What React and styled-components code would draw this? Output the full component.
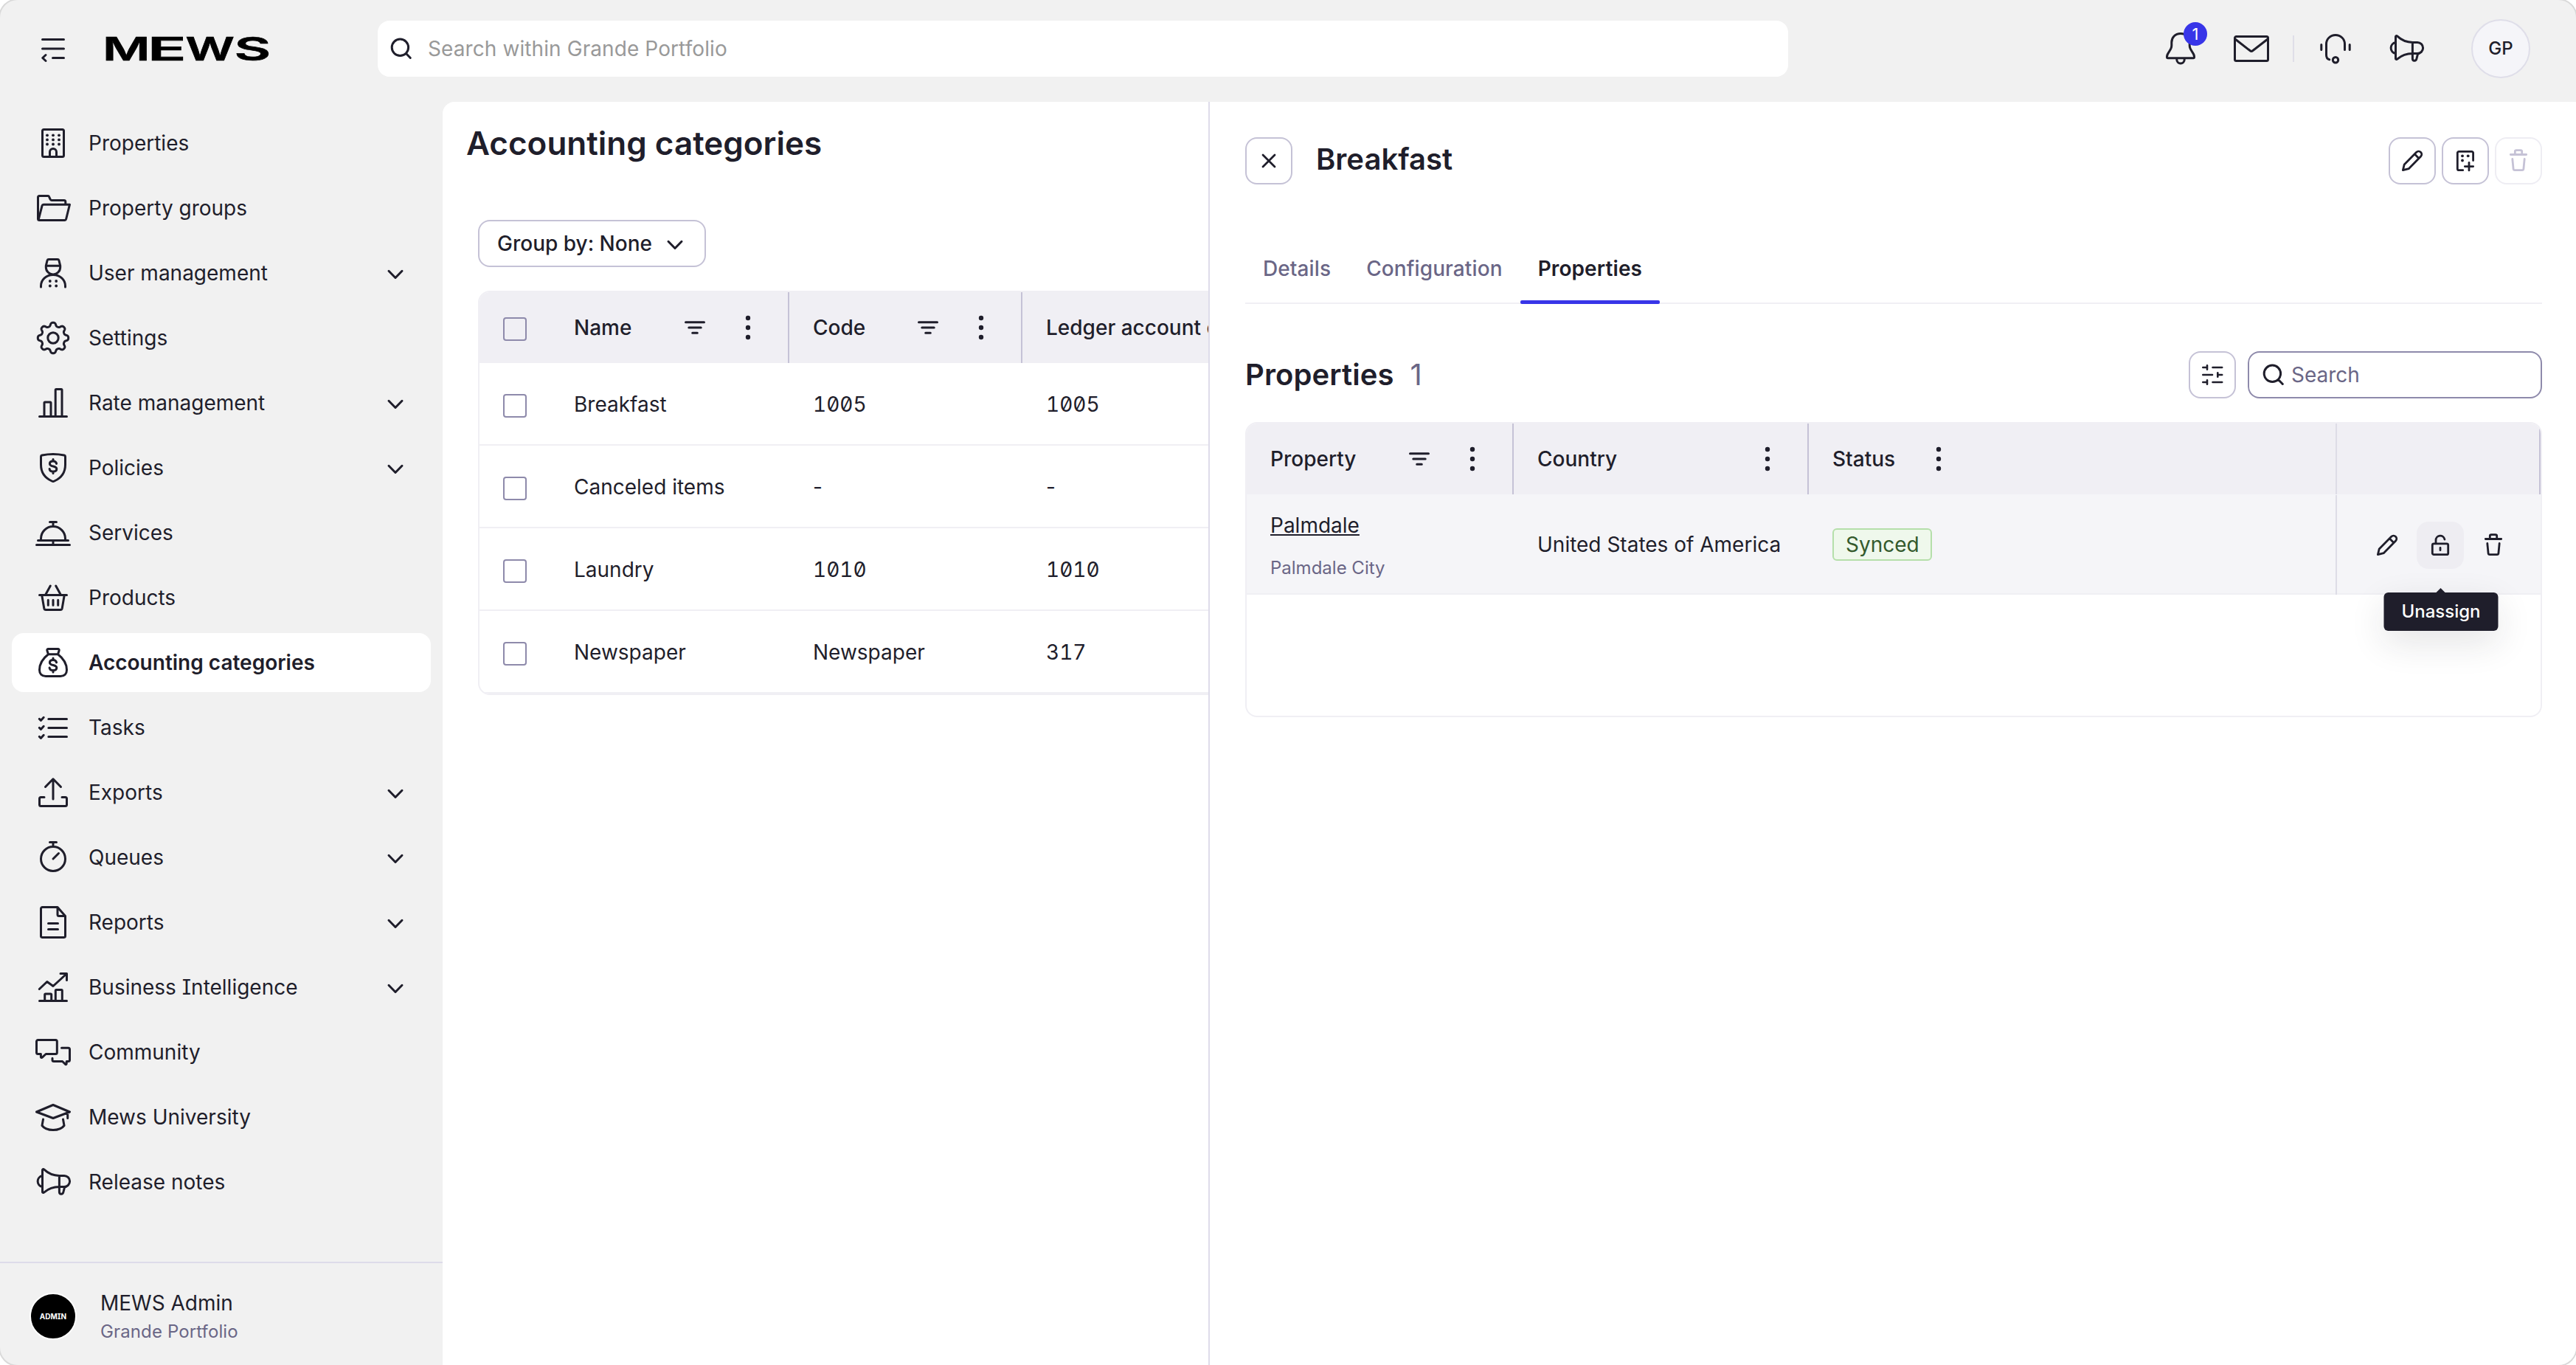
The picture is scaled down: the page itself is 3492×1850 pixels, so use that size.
import styled, { createGlobalStyle, css } from "styled-components";

const INK = "#1f1e2b";
const MUTED = "#6a6686";
const LINE = "#f0eff4";
const BORDER = "#c5c2d6";

const GlobalStyle = createGlobalStyle`
  * {
    box-sizing: border-box;
  }
  body {
    margin: 0;
    background: #ffffff;
    color: ${INK};
    font-family: Inter, "Liberation Sans", sans-serif;
    font-size: 28px;
    line-height: 40px;
    font-feature-settings: "cv08" 1;
    overflow: hidden;
  }
`;

// ICONS, 48 grid for navigation and 32 grid for buttons
const gearPath = (() => {
  const points = [];
  for (let i = 0; i < 160; i++) {
    const a = (i / 160) * Math.PI * 2;
    const r = 18.4 + 2.3 * (Math.tanh(1.7 * Math.cos(8 * a)) / Math.tanh(1.7));
    points.push(`${(24 + r * Math.sin(a)).toFixed(2)} ${(24 - r * Math.cos(a)).toFixed(2)}`);
  }
  return `M${points.join("L")}Z`;
})();

const dollar = (y) =>
  `M28.6 ${y - 3.6}c-.5-2.2-2.3-3.4-4.6-3.4-2.7 0-4.6 1.4-4.6 3.5 0 4.9 9.4 2.2 9.4 7.1 0 2.2-2 3.5-4.8 3.5-2.7 0-4.6-1.3-4.9-3.6M24 ${y - 9.4}v2.4M24 ${y + 7}v2.4`;

const PATHS = {
  menu: "M9.5 11.5h29M9.5 24h29M23.5 36.5h15M14 32.5l-4.3 4 4.3 4",
  building: "M11.5 5.5h25a2 2 0 0 1 2 2v33a2 2 0 0 1-2 2h-25a2 2 0 0 1-2-2v-33a2 2 0 0 1 2-2zM19.5 42.5V36a4.5 4.5 0 0 1 9 0v6.5",
  folder: "M40.8 19v-3.6a2 2 0 0 0-2-2H22a2 2 0 0 1-1.9-1.3l-1.4-3.3a2 2 0 0 0-1.8-1.3H5.5a2 2 0 0 0-2 2v29a2 2 0 0 0 2 2h34.2a2 2 0 0 0 1.9-1.5L46.5 19.2H11a2 2 0 0 0-1.9 1.5L4.4 39",
  user: "M14.3 14.2l1.8-7.3a2 2 0 0 1 1.9-1.4h12a2 2 0 0 1 1.9 1.4l1.8 7.3v2a9.7 9.7 0 0 1-19.4 0zM14.3 14.2h19.4M7.5 43v-1.6C7.5 33 14.6 26.5 24 26.5S40.5 33 40.5 41.4V43",
  gear: `${gearPath}M31.2 24a7.2 7.2 0 1 1-14.4 0a7.2 7.2 0 0 1 14.4 0z`,
  bars: "M5.5 42.5h37M12 42.5V24a1 1 0 0 1 1-1h7a1 1 0 0 1 1 1v18.5M27.2 42.5v-36a1 1 0 0 1 1-1H35a1 1 0 0 1 1 1v36",
  shield: `M7.5 8.8c0-.9.6-1.6 1.5-1.8C14 6 18.5 5.5 24 5.5S34 6 39 7c.9.2 1.5.9 1.5 1.8v11c0 11-6.5 18.5-14.8 22.2a4 4 0 0 1-3.4 0C14 38.3 7.5 30.8 7.5 19.8z${dollar(22)}`,
  bell: "M19.5 9.5h9M24 9.5v6M7.5 34v-2a16.5 16.5 0 0 1 33 0v2M3.5 34.5h41M24 34.5v6M1.5 40.5h45",
  basket: "M5.5 20.5h37M20.3 8l-6.6 12M27.7 8l6.6 12M8.8 21l3 17.5a2.5 2.5 0 0 0 2.5 2h19.4a2.5 2.5 0 0 0 2.5-2l3-17.5M17.3 27.3v7M24 27.3v7M30.7 27.3v7",
  moneybag: `M17.5 5.5h13a1.7 1.7 0 0 1 1.6 2.3l-1.6 4.9h-13l-1.6-4.9a1.7 1.7 0 0 1 1.6-2.3zM17.5 12.7C10.5 18 5.5 26 5.5 34c0 5.3 3.2 8.5 8.5 8.5h20c5.3 0 8.5-3.2 8.5-8.5 0-8-5-16-12-21.3${dollar(27.5)}`,
  tasks: "M17.8 12.5h24.7M17.8 24.5h24.7M17.8 36.5h24.7M5.3 12.4l2.1 2 3.8-4.1M5.3 24.4l2.1 2 3.8-4.1M5.3 36.4l2.1 2 3.8-4.1",
  upload: "M24 33V6M13.5 16.5L24 5.8l10.5 10.7M12 30.5H7.5a2 2 0 0 0-2 2v8a2 2 0 0 0 2 2h33a2 2 0 0 0 2-2v-8a2 2 0 0 0-2-2H36",
  timer: "M19.5 3.5h9M24 3.5v6M40.5 26a16.5 16.5 0 1 1-33 0a16.5 16.5 0 0 1 33 0zM24 26l7.5-7.5",
  report: "M30 3.5H9.5a2 2 0 0 0-2 2v37a2 2 0 0 0 2 2h29a2 2 0 0 0 2-2v-27zM30 3.5v10a2 2 0 0 0 2 2h8.5M17.5 25.5h13M17.5 33.5h13",
  trend: "M5.5 42.5h37M12.7 42.5V34a1 1 0 0 1 1-1h7a1 1 0 0 1 1 1v8.5M27.3 42.5v-14a1 1 0 0 1 1-1h7a1 1 0 0 1 1 1v14M5.3 26.5l10.5-10 8.2 6L42 6M34 5.5h8.5v9",
  chat: "M3.5 7.5h23.8a2 2 0 0 1 2 2v15a2 2 0 0 1-2 2H14.2l-5 4.7c-.8.7-1.8.2-1.8-.8v-3.9H3.5a2 2 0 0 1-2-2v-15a2 2 0 0 1 2-2zM35.5 18.3h9a2 2 0 0 1 2 2v14.2a2 2 0 0 1-2 2h-2.3v3c0 1-1 1.5-1.8.8l-3.8-3.8H25a2 2 0 0 1-2-2v-2.2",
  cap: "M24 7.5L46.5 17 24 25.5 1.5 17zM43.7 18.5v7M10.5 27L9 35.5c3 4 8.5 6 15 6s12-2 15-6L37.5 27",
  megaphone: "M9.5 37.4V7.8c0-1.1 1.3-1.7 2.1-.9C16.8 11.8 24 15.4 32.4 15.4H39a7.6 7.6 0 0 1 0 15.2h-6.6c-8.4 0-15.6 3.2-20.8 7.6-.8.7-2.1.2-2.1-.8zM9.5 15.6a7.6 7.6 0 0 0 0 15M32.4 15.4v22c0 3.6 4.6 3.8 5.4.6l1.9-7.4",
  notification: "M24 3.5c-7.5 0-12.2 5.4-12.2 12v4.3c0 6.7-6.3 9.5-6.3 14.9v.8c0 .7.6 1.3 1.3 1.3h34.4c.7 0 1.3-.6 1.3-1.3v-.8c0-5.4-6.3-8.2-6.3-14.9v-4.3c0-6.6-4.7-12-12.2-12zM18.8 37.5v1.2a5.2 5.2 0 0 0 10.4 0v-1.2",
  mail: "M3.5 7.5h41a2 2 0 0 1 2 2v29a2 2 0 0 1-2 2h-41a2 2 0 0 1-2-2v-29a2 2 0 0 1 2-2zM2 11l20.3 15.8a2.8 2.8 0 0 0 3.4 0L46 11",
  headset: "M36.5 25.5v-8a12.5 12 0 0 0-25 0v15c0 3.6 1.6 5.6 4.3 6.3M4.8 18.5v7M43.2 18.5v7M27.7 39.2a3.7 3.7 0 1 1-7.4 0a3.7 3.7 0 0 1 7.4 0z",
};

const DOTS = {
  building: [[16, 13.3], [24, 13.3], [32, 13.3], [16, 19.4], [24, 19.4], [32, 19.4], [16, 25.5], [24, 25.5], [32, 25.5]],
  user: [[19.8, 35], [28.2, 35], [19.8, 41.5], [28.2, 41.5]],
};

const SMALL = {
  chevron: "M7 13.3l9 9.2 9-9.2",
  search: "M25.6 14.3a11.2 11.2 0 1 1-22.4 0a11.2 11.2 0 0 1 22.4 0zM22.5 22.5l5.8 6",
  close: "M8 8l16 16M24 8L8 24",
  pencil: "M3.4 28.6L5.2 21 21.7 4.3a4.1 4.1 0 0 1 5.9 5.7L11.2 26.7zM19.7 7.3l4.9 4.9",
  addBuilding: "M26.6 15.5V5.3a2 2 0 0 0-2-2H7.3a2 2 0 0 0-2 2v21.4a2 2 0 0 0 2 2h5.4M21 18.3v10.6M15.3 23.6h11.4",
  trash: "M5.3 7.5h21.4M11.3 7V3.5a1.8 1.8 0 0 1 1.8-1.8h5.8a1.8 1.8 0 0 1 1.8 1.8V7M7.8 13.5l1.3 13.3a2 2 0 0 0 2 1.8h9.8a2 2 0 0 0 2-1.8l1.3-13.3",
  unlock: "M7.3 13.8h17.4a2 2 0 0 1 2 2v10.9a2 2 0 0 1-2 2H7.3a2 2 0 0 1-2-2V15.8a2 2 0 0 1 2-2zM10 13.8V9.3a6 6 0 0 1 11.9-1.2M16 19.3v3.4",
  sliders: "M3.3 6h5M9 3.3v5.4M16.5 6h12.7M3.3 16H16M23.3 13.3v5.4M24 16h5.2M3.3 26h5M9 23.3v5.4M16.5 26h12.7",
  filter: "M3.5 8.8h25M7.8 16h16.4M12.7 23.2h6.6",
};

const Svg = styled.svg`
  flex: none;
  display: block;
  fill: none;
  stroke: currentColor;
  stroke-linecap: round;
  stroke-linejoin: round;
  overflow: visible;
`;

const NavIcon = ({ name }) => (
  <Svg width="48" height="48" viewBox="0 0 48 48" strokeWidth="3">
    <path d={PATHS[name]} />
    {(DOTS[name] || []).map(([x, y]) => (
      <circle key={`${x}-${y}`} cx={x} cy={y} r="1.9" fill="currentColor" stroke="none" />
    ))}
  </Svg>
);

const SmallIcon = ({ name, weight = 2.8 }) => (
  <Svg width="32" height="32" viewBox="0 0 32 32" strokeWidth={weight}>
    <path d={SMALL[name]} />
    {name === "addBuilding" && (
      <g fill="currentColor" stroke="none">
        <circle cx="12" cy="9.3" r="1.9" />
        <circle cx="19.7" cy="9.3" r="1.9" />
        <circle cx="12" cy="15.5" r="1.9" />
      </g>
    )}
  </Svg>
);

const MoreIcon = () => (
  <Svg width="32" height="32" viewBox="0 0 32 32">
    <g fill="currentColor" stroke="none">
      <circle cx="16" cy="3" r="3.2" />
      <circle cx="16" cy="16" r="3.2" />
      <circle cx="16" cy="29" r="3.2" />
    </g>
  </Svg>
);

const Logo = () => (
  <LogoSvg width="224" height="48" viewBox="0 0 224 48">
    <text x="-5" y="40" textLength="64.5" lengthAdjust="spacingAndGlyphs">M</text>
    <text x="56" y="40" textLength="52.6" lengthAdjust="spacingAndGlyphs">E</text>
    <text x="107.6" y="40" textLength="66.4" lengthAdjust="spacingAndGlyphs">W</text>
    <text x="173.6" y="40" textLength="49.7" lengthAdjust="spacingAndGlyphs">S</text>
  </LogoSvg>
);

// DATA
const NAV = [
  { icon: "building", label: "Properties" },
  { icon: "folder", label: "Property groups" },
  { icon: "user", label: "User management", more: true },
  { icon: "gear", label: "Settings" },
  { icon: "bars", label: "Rate management", more: true },
  { icon: "shield", label: "Policies", more: true },
  { icon: "bell", label: "Services" },
  { icon: "basket", label: "Products" },
  { icon: "moneybag", label: "Accounting categories", active: true },
  { icon: "tasks", label: "Tasks" },
  { icon: "upload", label: "Exports", more: true },
  { icon: "timer", label: "Queues", more: true },
  { icon: "report", label: "Reports", more: true },
  { icon: "trend", label: "Business Intelligence", more: true },
  { icon: "chat", label: "Community" },
  { icon: "cap", label: "Mews University" },
  { icon: "megaphone", label: "Release notes" },
];

const CATEGORIES = [
  { name: "Breakfast", code: "1005", ledger: "1005" },
  { name: "Canceled items", code: "-", ledger: "-" },
  { name: "Laundry", code: "1010", ledger: "1010" },
  { name: "Newspaper", code: "Newspaper", ledger: "317" },
];

const TABS = ["Details", "Configuration", "Properties"];

const isNumber = (value) => /^\d/.test(value);

const App = () => {
  return (
    <Window>
      <GlobalStyle />
      <TopBar>
        <NavIcon name="menu" />
        <Logo />
        <GlobalSearch>
          <SmallIcon name="search" weight={3} />
          <span>Search within Grande Portfolio</span>
        </GlobalSearch>
        <TopActions>
          <IconSlot>
            <NavIcon name="notification" />
            <Count>1</Count>
          </IconSlot>
          <NavIcon name="mail" />
        </TopActions>
        <Divider />
        <TopActions>
          <NavIcon name="headset" />
          <NavIcon name="megaphone" />
        </TopActions>
        <Initials>GP</Initials>
      </TopBar>
      <Body>
        <Sidebar>
          <Nav>
            {NAV.map((item) => (
              <NavItem key={item.label} $active={item.active}>
                <NavIcon name={item.icon} />
                <NavLabel>{item.label}</NavLabel>
                {item.more && <SmallIcon name="chevron" weight={3} />}
              </NavItem>
            ))}
          </Nav>
          <Account>
            <Avatar>ADMIN</Avatar>
            <div>
              <AccountName>MEWS Admin</AccountName>
              <AccountPlace>Grande Portfolio</AccountPlace>
            </div>
          </Account>
        </Sidebar>
        <Main>
          <ListPane>
            <PageTitle>Accounting categories</PageTitle>
            <GroupBy>
              Group by: None
              <SmallIcon name="chevron" weight={3} />
            </GroupBy>
            <CategoryTable>
              <HeadRow>
                <CheckCell><Checkbox /></CheckCell>
                <HeadCell $width={324}><Grow>Name</Grow><SmallIcon name="filter" weight={3} /><MoreIcon /></HeadCell>
                <HeadCell $width={316}><Grow>Code</Grow><SmallIcon name="filter" weight={3} /><MoreIcon /></HeadCell>
                <HeadCell $width={480}><Grow>Ledger account code</Grow><SmallIcon name="filter" weight={3} /><MoreIcon /></HeadCell>
              </HeadRow>
              {CATEGORIES.map((row) => (
                <CategoryRow key={row.name}>
                  <CheckCell><Checkbox /></CheckCell>
                  <Cell $width={324}>{row.name}</Cell>
                  <Cell $width={316} $numeric={isNumber(row.code)}>{row.code}</Cell>
                  <Cell $width={480} $numeric={isNumber(row.ledger)}>{row.ledger}</Cell>
                </CategoryRow>
              ))}
            </CategoryTable>
          </ListPane>
          <DetailPane>
            <DetailHead>
              <IconButton><SmallIcon name="close" /></IconButton>
              <DetailTitle>Breakfast</DetailTitle>
              <ButtonGroup>
                <IconButton><SmallIcon name="pencil" /></IconButton>
                <IconButton><SmallIcon name="addBuilding" /></IconButton>
                <IconButton $disabled><SmallIcon name="trash" /></IconButton>
              </ButtonGroup>
            </DetailHead>
            <Tabs>
              {TABS.map((tab) => (
                <Tab key={tab} $active={tab === "Properties"}>{tab}</Tab>
              ))}
            </Tabs>
            <SectionHead>
              <SectionTitle>Properties</SectionTitle>
              <Total>1</Total>
              <IconButton><SmallIcon name="sliders" weight={2.6} /></IconButton>
              <TableSearch>
                <SmallIcon name="search" weight={3} />
                Search
              </TableSearch>
            </SectionHead>
            <PropertyTable>
              <HeadRow>
                <HeadCell $width={362}><Grow>Property</Grow><SmallIcon name="filter" weight={3} /><MoreIcon /></HeadCell>
                <HeadCell $width={400}><Grow>Country</Grow><MoreIcon /></HeadCell>
                <HeadCell $width={232} $plain><Grow>Status</Grow><MoreIcon /></HeadCell>
                <ActionHead />
              </HeadRow>
              <PropertyRow>
                <NameCell>
                  <PropertyLink>Palmdale</PropertyLink>
                  <City>Palmdale City</City>
                </NameCell>
                <Cell $width={400}>United States of America</Cell>
                <Cell $width={232}><Tag>Synced</Tag></Cell>
                <ActionCell>
                  <RowAction><SmallIcon name="pencil" /></RowAction>
                  <RowAction $hover>
                    <SmallIcon name="unlock" />
                    <Tooltip>Unassign</Tooltip>
                  </RowAction>
                  <RowAction><SmallIcon name="trash" /></RowAction>
                </ActionCell>
              </PropertyRow>
            </PropertyTable>
          </DetailPane>
        </Main>
      </Body>
    </Window>
  );
};

// STYLES
const Window = styled.div`
  width: 3492px;
  height: 1850px;
  display: flex;
  flex-direction: column;
  background: #f1f1f1;
  border-radius: 24px;
  box-shadow: 0 0 0 2px #d9d9d9;
  overflow: hidden;
`;

const TopBar = styled.header`
  flex: none;
  height: 132px;
  margin-bottom: 6px;
  padding: 0 62px 0 48px;
  display: flex;
  align-items: center;
`;

const LogoSvg = styled.svg`
  flex: none;
  margin: 0 144px 0 48px;
  overflow: visible;
  fill: #000;
  stroke: #000;
  stroke-width: 0.6;
  font-family: Inter, sans-serif;
  font-size: 44px;
  font-weight: 600;
`;

const GlobalSearch = styled.div`
  width: 1912px;
  height: 76px;
  margin-right: auto;
  padding: 0 16px;
  display: flex;
  align-items: center;
  gap: 20px;
  background: #fff;
  border-radius: 16px;
  letter-spacing: 0.09px;
  span {
    color: #999;
  }
`;

const TopActions = styled.div`
  display: flex;
  gap: 48px;
`;

const IconSlot = styled.div`
  position: relative;
`;

const Count = styled.span`
  position: absolute;
  top: -12px;
  left: 28px;
  width: 32px;
  height: 32px;
  display: flex;
  align-items: center;
  justify-content: center;
  border-radius: 50%;
  background: #3835e8;
  color: #fff;
  font-size: 22px;
`;

const Divider = styled.div`
  width: 2px;
  height: 36px;
  margin: 0 32px;
  background: #dfdee8;
`;

const Initials = styled.div`
  width: 80px;
  height: 80px;
  margin-left: 64px;
  display: flex;
  align-items: center;
  justify-content: center;
  border: 2px solid #dfdee9;
  border-radius: 50%;
  background: #f5f5f9;
  font-size: 24px;
  font-weight: 500;
`;

const Body = styled.div`
  flex: 1;
  min-height: 0;
  display: flex;
`;

const Sidebar = styled.aside`
  flex: none;
  width: 600px;
  display: flex;
  flex-direction: column;
  justify-content: space-between;
`;

const Nav = styled.nav`
  padding: 16px 16px 0;
  display: flex;
  flex-direction: column;
  gap: 8px;
`;

const NavItem = styled.div`
  height: 80px;
  padding: 0 32px;
  display: flex;
  align-items: center;
  gap: 24px;
  border-radius: 16px;
  ${({ $active }) => $active && css`
    background: #fff;
    font-weight: 600;
  `}
`;

const NavLabel = styled.span`
  flex: 1;
`;

const Account = styled.div`
  height: 140px;
  padding: 34px 40px 0;
  display: flex;
  align-items: flex-start;
  gap: 32px;
  border-top: 2px solid #dddcea;
`;

const Avatar = styled.div`
  width: 64px;
  height: 64px;
  margin-top: 6px;
  display: flex;
  align-items: center;
  justify-content: center;
  border: 2px solid #fff;
  border-radius: 50%;
  background: #000;
  color: #fff;
  font-size: 10px;
  font-weight: 700;
`;

const AccountName = styled.div`
  line-height: 40px;
`;

const AccountPlace = styled.div`
  color: ${MUTED};
  font-size: 24px;
  letter-spacing: 0.12px;
  line-height: 37px;
`;

const Main = styled.main`
  flex: 1;
  min-width: 0;
  display: flex;
  background: #fff;
  border-top-left-radius: 16px;
  overflow: hidden;
`;

const ListPane = styled.section`
  flex: none;
  width: 1038px;
  padding-left: 48px;
  overflow: hidden;
`;

const PageTitle = styled.h1`
  margin: 0 0 48px -16px;
  font-size: 44px;
  font-weight: 600;
  line-height: 112px;
`;

const GroupBy = styled.div`
  width: fit-content;
  height: 64px;
  padding: 0 24px;
  display: flex;
  align-items: center;
  gap: 15px;
  border: 2px solid ${BORDER};
  border-radius: 16px;
  font-weight: 500;
`;

const Table = styled.div`
  margin-top: 32px;
  border: 2px solid ${LINE};
  border-radius: 16px;
  overflow: hidden;
`;

const CategoryTable = styled(Table)`
  width: 1220px;
`;

const PropertyTable = styled(Table)`
  height: 400px;
`;

const HeadRow = styled.div`
  height: 96px;
  display: flex;
  background: ${LINE};
`;

const HeadCell = styled.div`
  flex: none;
  width: ${({ $width }) => $width}px;
  padding: 0 38px 0 32px;
  display: flex;
  align-items: center;
  gap: 40px;
  font-weight: 500;
  white-space: nowrap;
  border-right: 2px solid ${({ $plain }) => ($plain ? "transparent" : BORDER)};
`;

const Grow = styled.span`
  flex: 1;
`;

const Row = styled.div`
  display: flex;
  border-bottom: 2px solid ${LINE};
`;

const CategoryRow = styled(Row)`
  height: 112px;
  padding-top: 2px;
`;

const Cell = styled.div`
  flex: none;
  width: ${({ $width }) => $width}px;
  padding-left: 32px;
  display: flex;
  align-items: center;
  ${({ $numeric }) => $numeric && css`
    font-feature-settings: "cv08" 1, "zero" 1, "tnum" 1;
  `}
`;

const CheckCell = styled.div`
  flex: none;
  width: 96px;
  padding-left: 32px;
  display: flex;
  align-items: center;
`;

const Checkbox = styled.div`
  width: 32px;
  height: 32px;
  margin-top: 4px;
  border: 2px solid #8e8aab;
  border-radius: 4px;
`;

const DetailPane = styled.section`
  flex: 1;
  min-width: 0;
  padding: 48px 46px 0 48px;
  border-left: 2px solid #dedcea;
`;

const DetailHead = styled.div`
  height: 64px;
  display: flex;
  align-items: flex-start;
`;

const IconButton = styled.div`
  flex: none;
  width: 64px;
  height: 64px;
  display: flex;
  align-items: center;
  justify-content: center;
  border: 2px solid ${({ $disabled }) => ($disabled ? "#eeedf3" : BORDER)};
  border-radius: 16px;
  color: ${({ $disabled }) => ($disabled ? BORDER : INK)};
`;

const DetailTitle = styled.h2`
  flex: 1;
  margin: 0 0 0 32px;
  font-size: 40px;
  font-weight: 600;
  line-height: 60px;
`;

const ButtonGroup = styled.div`
  display: flex;
  gap: 8px;
`;

const Tabs = styled.div`
  margin-top: 68px;
  display: flex;
  border-bottom: 2px solid ${LINE};
`;

const Tab = styled.div`
  position: relative;
  padding: 0 24px;
  color: ${({ $active }) => ($active ? INK : MUTED)};
  font-weight: ${({ $active }) => ($active ? 600 : 500)};
  letter-spacing: 0.1px;
  line-height: 92px;
  ${({ $active }) => $active && css`
    &::after {
      content: "";
      position: absolute;
      left: 0;
      right: 0;
      bottom: -2px;
      height: 5px;
      border-radius: 2px;
      background: #3835e8;
    }
  `}
`;

const SectionHead = styled.div`
  margin-top: 64px;
  height: 64px;
  display: flex;
  align-items: center;
`;

const SectionTitle = styled.h3`
  margin: 0;
  font-size: 40px;
  font-weight: 600;
  letter-spacing: 0.1px;
`;

const Total = styled.span`
  margin: 0 auto 0 22px;
  color: ${MUTED};
  font-size: 40px;
`;

const TableSearch = styled.div`
  width: 399px;
  height: 64px;
  margin-left: 16px;
  padding: 0 17px;
  display: flex;
  align-items: center;
  gap: 8px;
  border: 2px solid #8e8aab;
  border-radius: 16px;
  color: ${MUTED};
  svg {
    color: ${INK};
  }
`;

const PropertyRow = styled(Row)`
  height: 136px;
  padding-top: 1px;
  background: #f5f5f8;
`;

const ActionHead = styled.div`
  width: 278px;
  margin-left: auto;
  border-left: 2px solid #dddce6;
  border-right: 2px solid ${BORDER};
`;

const NameCell = styled.div`
  width: 362px;
  padding: 21px 0 0 32px;
  display: flex;
  flex-direction: column;
  align-items: flex-start;
  gap: 20px;
`;

const PropertyLink = styled.span`
  text-decoration: underline;
  text-decoration-thickness: 2px;
  text-decoration-skip-ink: none;
  text-underline-offset: 2px;
`;

const City = styled.span`
  color: ${MUTED};
  font-size: 24px;
  line-height: 36px;
`;

const Tag = styled.span`
  height: 44px;
  padding: 0 15px 0 16px;
  display: flex;
  align-items: center;
  border: 2px solid #b5dfaa;
  border-radius: 6px;
  background: #eff8ec;
  color: #345a2d;
`;

const ActionCell = styled.div`
  width: 278px;
  height: 135px;
  margin-left: auto;
  padding-left: 36px;
  display: flex;
  align-items: center;
  gap: 8px;
  border-left: 2px solid #dddce6;
`;

const RowAction = styled.div`
  position: relative;
  width: 64px;
  height: 64px;
  display: flex;
  align-items: center;
  justify-content: center;
  border-radius: 16px;
  background: ${({ $hover }) => ($hover ? "#eeedf2" : "transparent")};
`;

const Tooltip = styled.div`
  position: absolute;
  z-index: 2;
  top: 96px;
  left: calc(50% + 1px);
  height: 52px;
  padding: 0 24px;
  transform: translateX(-50%);
  border-radius: 6px;
  background: ${INK};
  box-shadow: 0 16px 48px rgba(31, 30, 43, 0.12);
  color: #fff;
  font-size: 24px;
  font-weight: 500;
  line-height: 51px;
  &::before {
    content: "";
    position: absolute;
    top: -6px;
    left: 50%;
    margin-left: -8px;
    border: 7px solid transparent;
    border-top: 0;
    border-bottom-color: ${INK};
  }
`;

export default App;
